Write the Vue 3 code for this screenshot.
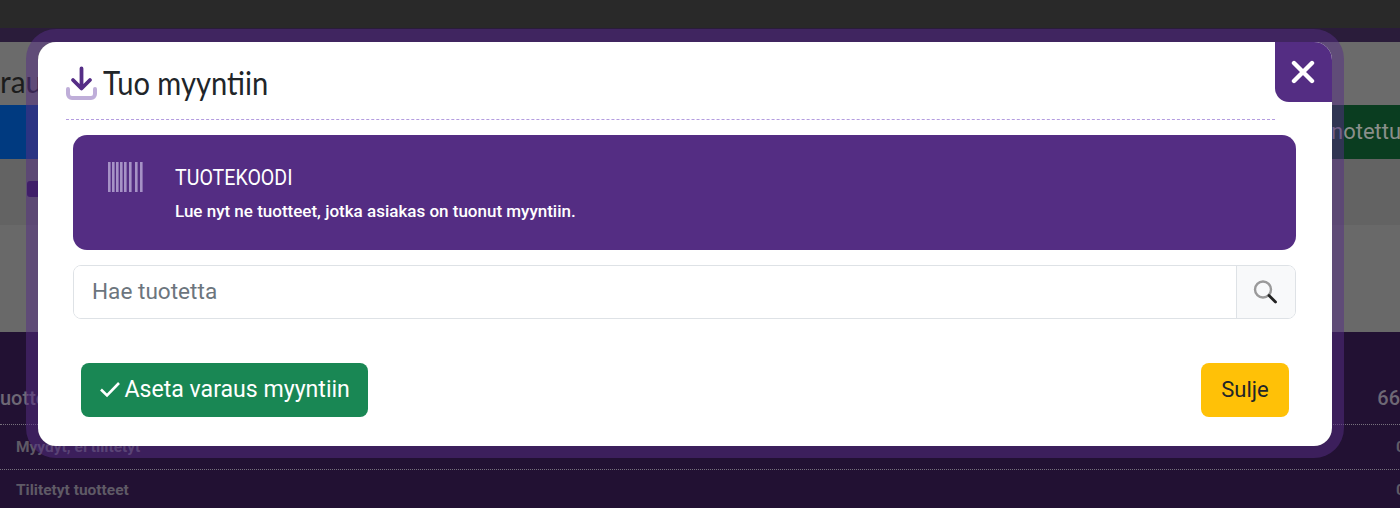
<template>
  <div class="page">
    <div class="topbar"></div>
    <div class="strip"></div>
    <div class="heading">raus</div>
    <div class="tabs">
      <div class="tab-blue"></div>
      <div class="tab-green"><span>notettu</span></div>
    </div>
    <div class="toolbar"><span class="tool-icon"></span></div>
    <div class="blank"></div>
    <div class="summary">
      <div class="sum-row first"><span class="big">uotteet</span><span class="big">66</span></div>
      <div class="sum-row"><b>Myydyt, ei tilitetyt</b><b>0</b></div>
      <div class="sum-row last"><b>Tilitetyt tuotteet</b><b>0</b></div>
    </div>

    <!-- Modal -->
    <div class="modal-ring">
      <div class="modal-box">
        <button type="button" class="close-btn" aria-label="Sulje">
          <svg width="24" height="24" viewBox="0 0 24 24">
            <path d="M3 3 L21 21 M21 3 L3 21" stroke="#fff" stroke-width="4.4" stroke-linecap="round" />
          </svg>
        </button>

        <div class="modal-header">
          <svg class="title-icon" width="32" height="36" viewBox="0 0 32 36">
            <path d="M2 23 V28 a4 4 0 0 0 4 4 H25 a4 4 0 0 0 4 -4 V23" fill="none" stroke="#bfaed9" stroke-width="4" stroke-linecap="round" />
            <path d="M15.5 2.5 V22 M7 14 L15.5 22.5 L24 14" fill="none" stroke="#552d86" stroke-width="3.8" stroke-linecap="round" stroke-linejoin="round" />
          </svg>
          <h5 class="modal-title">Tuo myyntiin</h5>
        </div>

        <div class="modal-body">
          <div class="scan-card">
            <svg class="barcode" width="36" height="30" viewBox="0 0 36 30">
              <rect v-for="bar in bars" :key="bar[0]" :x="bar[0]" y="0" :width="bar[1]" height="30" fill="#a692c6" />
            </svg>
            <div class="scan-text">
              <div class="scan-title">TUOTEKOODI</div>
              <div class="scan-desc">Lue nyt ne tuotteet, jotka asiakas on tuonut myyntiin.</div>
            </div>
          </div>

          <div class="search">
            <input class="search-input" type="text" placeholder="Hae tuotetta" />
            <span class="search-addon">
              <svg width="26" height="26" viewBox="0 0 26 26">
                <circle cx="10" cy="10.5" r="8" fill="none" stroke="#9a9a9a" stroke-width="2.4" />
                <path d="M16 16.5 L22.5 23" stroke="#222" stroke-width="2.8" stroke-linecap="round" />
              </svg>
            </span>
          </div>
        </div>

        <div class="modal-footer">
          <button type="button" class="btn btn-green">
            <svg width="22" height="18" viewBox="0 0 22 18">
              <path d="M2 9.5 L8 15.5 L20 3" fill="none" stroke="#fff" stroke-width="2.6" />
            </svg>
            Aseta varaus myyntiin
          </button>
          <button type="button" class="btn btn-yellow">Sulje</button>
        </div>
      </div>
    </div>
  </div>
</template>

<script setup>
const bars = [
  [0, 2.6], [4, 2.6], [8, 2.6], [12, 2.6], [16, 2.6], [21, 2.6], [27, 2.6], [32, 2.6],
];
</script>

<style>
body {
  margin: 0;
  overflow: hidden;
}
</style>

<style scoped>
.page {
  position: relative;
  width: 1400px;
  height: 508px;
  overflow: hidden;
  display: flex;
  flex-direction: column;
  font-family: Roboto, "Liberation Sans", sans-serif;
  background: #666;
}

.topbar {
  height: 28px;
  background: #292929;
}

.strip {
  height: 14px;
  background: #2a1c3a;
}

.heading {
  height: 63px;
  background: #6b6b6b;
  color: #1c1c1c;
  font-family: Lato, sans-serif;
  font-size: 30px;
  line-height: 78px;
}

.tabs {
  height: 54px;
  display: flex;
}

.tab-blue {
  flex: 1;
  background: #003a80;
}

.tab-green {
  width: 400px;
  background: #0a3d20;
  color: #8a8f8b;
  font-size: 22px;
  line-height: 54px;
  box-sizing: border-box;
  padding-left: 331px;
  white-space: nowrap;
}

.toolbar {
  height: 66px;
  background: #636363;
  padding: 22px 0 0 27px;
  box-sizing: border-box;
}

.tool-icon {
  display: block;
  width: 14px;
  height: 16px;
  background: #2a0f4d;
  border-radius: 3px;
}

.blank {
  height: 107px;
  background: #696969;
}

.summary {
  flex: 1;
  background: #221133;
  color: #5f5a66;
}

.sum-row {
  display: flex;
  justify-content: space-between;
  align-items: center;
  height: 44px;
  padding-left: 16px;
  margin-right: -5px;
  font-size: 15.5px;
  border-bottom: 1px dotted #77717d;
}

.sum-row.first {
  height: 93px;
  padding: 40px 0 0 0;
  box-sizing: border-box;
  margin-right: 0;
  color: #6e6875;
}

.sum-row.last {
  height: 36px;
  padding-top: 2px;
  border-bottom: 0;
}

.big {
  font-size: 20px;
  font-weight: 500;
}

.modal-ring {
  position: absolute;
  left: 26px;
  top: 29px;
  width: 1294px;
  height: 404px;
  border: 12px solid rgba(85, 45, 134, 0.5);
  border-top-width: 13px;
  border-radius: 30px;
}

.modal-box {
  position: relative;
  height: 100%;
  background: #fff;
  border-radius: 18px;
  display: flex;
  flex-direction: column;
  overflow: hidden;
}

.close-btn {
  position: absolute;
  right: 0;
  top: 0;
  width: 57px;
  height: 60px;
  padding: 0 1px 0 0;
  border: 0;
  background: #542d83;
  border-bottom-left-radius: 14px;
  border-top-right-radius: 14px;
  display: flex;
  align-items: center;
  justify-content: center;
}

.modal-header {
  margin: 0 57px 0 28px;
  height: 78px;
  box-sizing: border-box;
  padding-top: 22px;
  display: flex;
  align-items: flex-start;
  gap: 5px;
  border-bottom: 1px dashed #b49ce0;
}

.title-icon {
  margin-top: 2px;
  flex: none;
}

.modal-title {
  margin: -2px 0 0;
  font-family: Lato, sans-serif;
  font-size: 32px;
  font-weight: 400;
  line-height: 42px;
  color: #212529;
  transform: scaleX(0.91);
  transform-origin: left;
  white-space: nowrap;
}

.modal-body {
  padding: 15px 36px 0 35px;
}

.scan-card {
  height: 115px;
  background: #542d83;
  border-radius: 14px;
  color: #fff;
  display: flex;
  padding: 26px 0 0 35px;
  box-sizing: border-box;
  gap: 31px;
}

.barcode {
  flex: none;
  margin-top: 1px;
}

.scan-title {
  margin-top: 1px;
  font-size: 22px;
  line-height: 32px;
  transform: scaleX(0.89);
  transform-origin: left;
  white-space: nowrap;
}

.scan-desc {
  margin-top: -1px;
  font-size: 17px;
  font-weight: 500;
  line-height: 36px;
}

.search {
  display: flex;
  height: 54px;
  margin-top: 15px;
  border: 1px solid #dee2e6;
  border-radius: 8px;
  box-sizing: border-box;
  overflow: hidden;
}

.search-input {
  flex: 1;
  min-width: 0;
  border: 0;
  outline: 0;
  padding: 0 18px 2px;
  font-family: Roboto, sans-serif;
  font-size: 22.6px;
  color: #212529;
}

.search-input::placeholder {
  color: #6c757d;
  opacity: 1;
}

.search-addon {
  width: 58px;
  flex: none;
  background: #f8f9fa;
  border-left: 1px solid #dee2e6;
  display: flex;
  align-items: center;
  justify-content: center;
}

.modal-footer {
  display: flex;
  justify-content: space-between;
  padding: 44px 43px 0 42.5px;
}

.btn {
  height: 54px;
  border: 0;
  border-radius: 8px;
  font-family: Roboto, sans-serif;
  font-size: 22px;
  display: flex;
  align-items: center;
  padding-bottom: 3px;
}

.btn-green {
  width: 287.5px;
  padding-left: 18px;
  padding-right: 0;
  gap: 4px;
  background: #198754;
  color: #fff;
  font-size: 23.1px;
}

.btn-yellow {
  width: 88px;
  justify-content: center;
  padding-left: 0;
  padding-right: 0;
  background: #ffc107;
  color: #212529;
}
</style>
